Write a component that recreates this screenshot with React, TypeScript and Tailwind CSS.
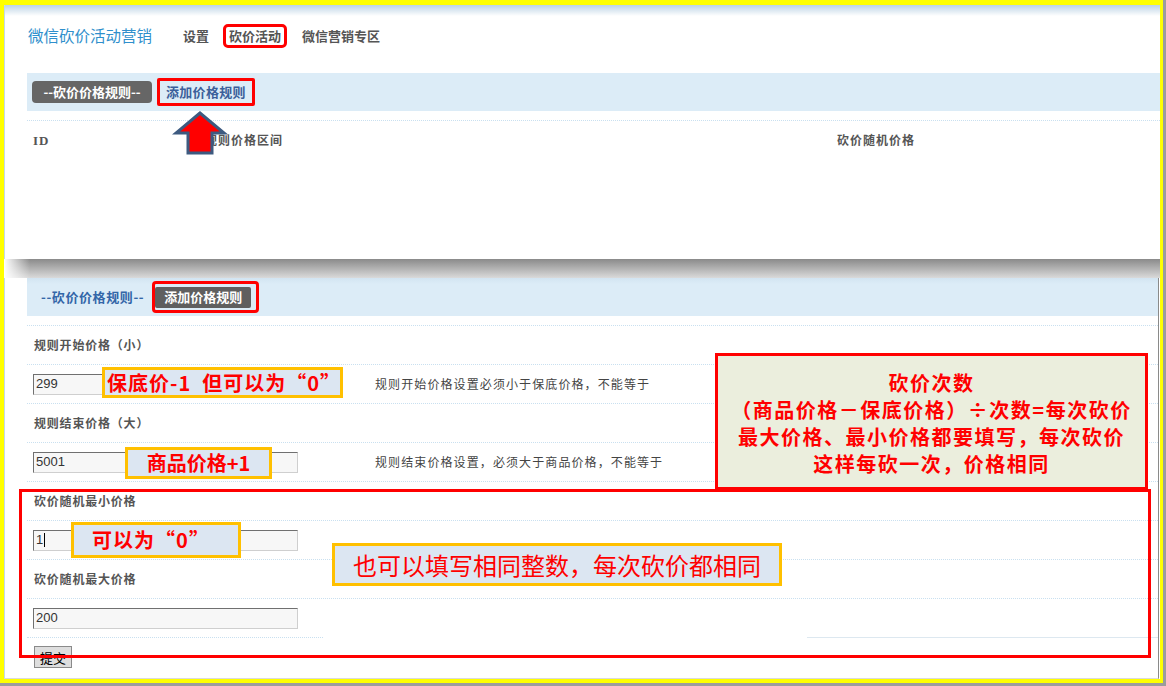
const dotted = "border-dotted border-[#c9e0f0]";

const FakeInput = ({ value, caret }: { value: string; caret?: boolean }) => (
  <div className="w-[265px] h-[21px] bg-[#f7f7f7] border border-t-[#707070] border-l-[#707070] border-b-[#cfcfcf] border-r-[#cfcfcf] flex items-center pl-[2px] font-['Liberation_Sans',sans-serif] text-[13px] text-[#333]">
    {value}
    {caret && <span className="w-px h-[14px] bg-black ml-px" />}
  </div>
);

const LabelRow = ({ text }: { text: string }) => (
  <div className={`h-[39px] border-b ${dotted} flex items-center pl-[7px] text-[12px] font-bold tracking-[0.8px] text-[#555]`}>
    {text}
  </div>
);

const InputRow = ({ value, desc, caret, last }: { value: string; desc?: string; caret?: boolean; last?: boolean }) => (
  <div className={`${last ? "h-[38px]" : `h-[39px] border-b ${dotted}`} flex items-center`}>
    <div className="w-[340px] pl-[6px]">
      <FakeInput value={value} caret={caret} />
    </div>
    {desc && <div className="pl-[8px] text-[12px] tracking-[1.1px] text-[#444]">{desc}</div>}
  </div>
);

const App = () => {
  return (
    <div lang="zh-CN" className="relative w-[1166px] h-[686px] bg-[#9c9c9c] overflow-hidden font-['Noto_Sans_CJK_SC',sans-serif]">
      <div className="w-[1163px] h-[683px] border-t-[5px] border-l-[4px] border-r-[3px] border-b-[4px] border-[#ffff00] bg-white flex flex-col">
        {/* upper screenshot */}
        <div className="h-[254px] shrink-0 border-l border-[#c4d9ea] bg-[linear-gradient(#bcd3e5,#ffffff_11px)]">
          <div className="h-[68px] flex items-center pl-[23px] pb-[6px]">
            <span className="text-[15.5px] text-[#2f8fcc]">微信砍价活动营销</span>
            <nav className="ml-[31px] flex items-center gap-[20px] text-[13px] font-bold text-[#555]">
              <span>设置</span>
              <span>砍价活动</span>
              <span className="ml-px">微信营销专区</span>
            </nav>
          </div>
          <div className="ml-[22px] h-[38px] bg-[#dcecf7] flex items-center pl-[5px]">
            <div className="w-[120px] h-[22px] rounded-[4px] bg-[#666] text-white text-[13px] font-bold flex items-center justify-center">
              --砍价价格规则--
            </div>
            <div className="ml-[5px] h-[28px] px-[6px] border-[3px] border-[#ff0000] rounded-[2px] flex items-center text-[13px] font-bold tracking-[0.3px] text-[#3b5f9a]">
              添加价格规则
            </div>
          </div>
          <div className={`mt-[9px] ml-[22px] border-t ${dotted}`} />
          <div className="ml-[22px] h-[39px] flex items-center text-[12px] font-bold tracking-[1px] text-[#555] font-['Liberation_Serif','Noto_Sans_CJK_SC',serif]">
            <div className="w-[178px] pl-[6px] text-[13px]">ID</div>
            <div className="w-[632px]">规则价格区间</div>
            <div>砍价随机价格</div>
          </div>
        </div>

        {/* shadow between screenshots */}
        <div className="h-[19px] shrink-0 bg-[linear-gradient(to_right,#ffffff,rgba(255,255,255,0)_26px),linear-gradient(#8a8a8a,#dadada)]" />

        {/* lower screenshot */}
        <div className="flex-1 mr-[1px] border-l border-l-[#c4d9ea] border-r border-r-[#8a8a8a] border-b border-b-[#dadada]">
          <div className="ml-[22px] h-[38px] bg-[linear-gradient(#d2e4f1,#dcecf7_6px)] flex items-center pl-[14px]">
            <span className="text-[13px] font-bold tracking-[0.6px] text-[#3366a8]">--砍价价格规则--</span>
            <div className="ml-[8px] w-[107px] h-[32px] border-[3px] border-[#ff0000] rounded-[4px] flex items-center">
              <div className="w-[96px] h-[21px] rounded-[2px] bg-[#5f5f5f] text-white text-[13px] font-bold flex items-center justify-center">
                添加价格规则
              </div>
            </div>
          </div>
          <div className={`mt-[9px] ml-[22px] border-t ${dotted}`}>
            <LabelRow text="规则开始价格（小）" />
            <InputRow value="299" desc="规则开始价格设置必须小于保底价格，不能等于" />
            <LabelRow text="规则结束价格（大）" />
            <InputRow value="5001" desc="规则结束价格设置，必须大于商品价格，不能等于" />
            <LabelRow text="砍价随机最小价格" />
            <InputRow value="1" caret />
            <LabelRow text="砍价随机最大价格" />
            <InputRow value="200" last />
            <div className="flex h-px">
              <div className={`w-[296px] border-t ${dotted}`} />
              <div className="ml-[484px] flex-1 bg-[#dde8f0]" />
            </div>
          </div>
          <button className="mt-[8px] ml-[29px] w-[38px] h-[22px] bg-[#dedede] border border-[#8a8a8a] text-[13px] text-black leading-none">
            提交
          </button>
        </div>
      </div>

      {/* annotations */}
      <div className="absolute left-[223px] top-[24px] w-[64px] h-[24px] border-[3px] border-[#ff0000] rounded-[5px]" />
      <svg className="absolute left-[172px] top-[110px]" width="58" height="46" viewBox="0 0 58 46">
        <polygon points="28,3 4,23 16,23 16,43 40,43 40,23 52,23" fill="#ff0000" stroke="#3d5a80" strokeWidth="3" strokeLinejoin="miter" />
      </svg>

      <div className="absolute left-[715px] top-[353px] w-[433px] h-[137px] border-[3px] border-[#ff0000] bg-[#ebeedd] pt-[13px] text-center text-[20px] leading-[27px] font-bold tracking-[1.5px] text-[#ff0000]">
        <div>砍价次数</div>
        <div>（商品价格－保底价格）÷次数=每次砍价</div>
        <div>最大价格、最小价格都要填写，每次砍价</div>
        <div>这样每砍一次，价格相同</div>
      </div>
      <div className="absolute left-[19px] top-[489px] w-[1132px] h-[169px] border-[3px] border-[#ff0000]" />

      <div className="absolute left-[102px] top-[367px] w-[241px] h-[31px] border-[3px] border-[#ffc000] bg-[#dce6f2] flex items-center pl-[2px] text-[20px] font-bold tracking-[1px] text-[#ff0000] whitespace-pre">
        保底价-1  但可以为“0”
      </div>
      <div className="absolute left-[125px] top-[447px] w-[147px] h-[32px] border-[3px] border-[#ffc000] bg-[#dce6f2] flex items-center justify-center text-[20px] font-bold text-[#ff0000]">
        商品价格+1
      </div>
      <div className="absolute left-[71px] top-[522px] w-[170px] h-[36px] border-[3px] border-[#ffc000] bg-[#dce6f2] flex items-center justify-center pr-[10px] text-[20px] font-bold tracking-[1px] text-[#ff0000]">
        可以为“0”
      </div>
      <div className="absolute left-[332px] top-[543px] w-[450px] h-[43px] border-[3px] border-[#ffc000] bg-[#dce6f2] flex items-center justify-center text-[24px] text-[#ff0000]">
        也可以填写相同整数，每次砍价都相同
      </div>
    </div>
  );
};

export default App;
